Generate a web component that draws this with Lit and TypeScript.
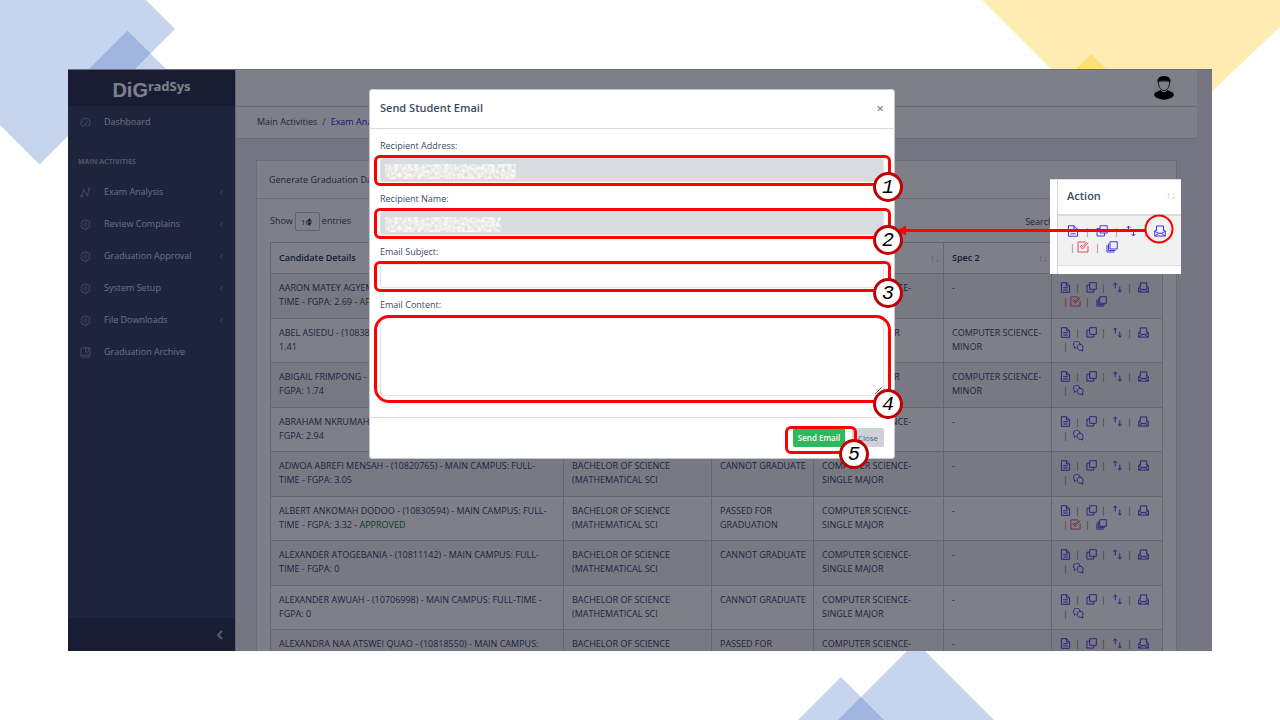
import { LitElement, html, svg, css, nothing } from "lit";
import { customElement, property } from "lit/decorators.js";

const icon = (body: unknown, cls = "icon") =>
  html`<svg class=${cls} viewBox="0 0 24 24" fill="none" stroke="currentColor" stroke-width="2" aria-hidden="true">${body}</svg>`;

const icons: Record<string, unknown> = {
  gauge: svg`<path d="M5 20a10 10 0 1 1 14 0h-4M5 20h4M12 15l5-6M12 6v1M5 13h1M7 8l1 1"/><circle cx="11.500" cy="16" r="1.500"/>`,
  graph: svg`<circle cx="3.500" cy="20" r="2"/><circle cx="8" cy="8" r="2"/><circle cx="16" cy="17" r="2"/><circle cx="20.500" cy="4" r="2"/><path d="M4.200 18l3-8M9.500 9.500l5 6M16.600 15l3.200-9"/>`,
  cog: svg`<path d="M9.500 1.500h5l1 3.500 3.500-.8 2.800 4.300L19.500 12l2.300 3.500L19 19.800l-3.500-.8-1 3.500h-5l-1-3.500-3.500.8-2.800-4.300L4.500 12 2.200 8.500 5 4.200l3.500.8z"/><circle cx="12" cy="12" r="3"/>`,
  book: svg`<path d="M22 18V2H5a3 3 0 0 0-3 3v14a3 3 0 0 0 3 3h17M22 18H5a3 3 0 0 0-3 2M12 2v9h6V2"/>`,
  doc: svg`<path d="M3 1.500h11l7 7v14H3zM14 1.500v7h7M7 12.500h10M7 17.500h10"/>`,
  copy: svg`<path d="M8 1.500h14.500V16H8zM8 7H2v15h15v-6"/>`,
  swap: svg`<path d="M7 14V2M3 6l4-4 4 4M17 10v12M13 18l4 4 4-4"/>`,
  mail: svg`<path d="M5 12V2h14v10M5 9l-3.500 3v10h21V12L19 9M1.500 12.500l7 4h7l7-4M1.500 22l7-5M22.500 22l-7-5"/>`,
  check: svg`<path d="M22 10v12H2V2h15M6 10l5 6L22.500 3.500M8.500 8l3 3.500L19 3"/>`,
  stack: svg`<path d="M8 1.500h14.500V16H8zM5 5v14h14M2 8v14h15"/>`,
  chat: svg`<path d="M15 7A7 7 0 1 0 3 12v4l3-2M9 13a6.500 6.500 0 1 1 12 4v5l-4-2A6.500 6.500 0 0 1 9 13z"/>`,
};

interface Student {
  details: string[];
  approved?: boolean;
  programme: string[];
  status: string[];
  major: string[];
  minor: string[];
}

const BSC = ["BACHELOR OF SCIENCE", "(MATHEMATICAL SCI"];
const SINGLE = ["COMPUTER SCIENCE-", "SINGLE MAJOR"];
const STATS = ["STATISTICS-MAJOR"];
const MINOR = ["COMPUTER SCIENCE-", "MINOR"];
const PASSED = ["PASSED FOR", "GRADUATION"];
const CANNOT = ["CANNOT GRADUATE"];
const NONE = ["-"];

const students: Student[] = [
  { details: ["AARON MATEY AGYEMAN - MAIN CAMPUS: FULL-", "TIME - FGPA: 2.69 - "], approved: true, programme: BSC, status: PASSED, major: SINGLE, minor: NONE },
  { details: ["ABEL ASIEDU - (10838) - MAIN CAMPUS: FULL-TIME - FGPA:", "1.41"], programme: BSC, status: CANNOT, major: STATS, minor: MINOR },
  { details: ["ABIGAIL FRIMPONG - MAIN CAMPUS: FULL-TIME -", "FGPA: 1.74"], programme: BSC, status: CANNOT, major: STATS, minor: MINOR },
  { details: ["ABRAHAM NKRUMAH - MAIN CAMPUS: FULL-TIME -", "FGPA: 2.94"], programme: BSC, status: CANNOT, major: SINGLE, minor: NONE },
  { details: ["ADWOA ABREFI MENSAH - (10820765) - MAIN CAMPUS: FULL-", "TIME - FGPA: 3.05"], programme: BSC, status: CANNOT, major: SINGLE, minor: NONE },
  { details: ["ALBERT ANKOMAH DODOO - (10830594) - MAIN CAMPUS: FULL-", "TIME - FGPA: 3.32 - "], approved: true, programme: BSC, status: PASSED, major: SINGLE, minor: NONE },
  { details: ["ALEXANDER ATOGEBANIA - (10811142) - MAIN CAMPUS: FULL-", "TIME - FGPA: 0"], programme: BSC, status: CANNOT, major: SINGLE, minor: NONE },
  { details: ["ALEXANDER AWUAH - (10706998) - MAIN CAMPUS: FULL-TIME -", "FGPA: 0"], programme: BSC, status: CANNOT, major: SINGLE, minor: NONE },
  { details: ["ALEXANDRA NAA ATSWEI QUAO - (10818550) - MAIN CAMPUS:", "FULL-TIME - FGPA: 0"], programme: BSC, status: PASSED, major: SINGLE, minor: NONE },
];

const lines = (parts: string[]) => parts.map((p, i) => (i ? html`<br />${p}` : p));

@customElement("row-actions")
class RowActions extends LitElement {
  @property({ type: Boolean }) approved = false;

  static styles = css`
    :host { display: block; margin-top: -1px; color: #4634e0; }
    .line { display: flex; align-items: center; height: var(--action-line, 14px); }
    .second { padding-left: 3px; }
    .link { display: flex; color: inherit; }
    .danger { color: #e04a62; }
    .talk { padding-left: 3px; }
    .icon { width: var(--action-icon, 11px); height: var(--action-icon, 11px); }
    .bar { width: 3px; margin: 0 var(--bar-after, 8px) 0 var(--bar-before, 4px); color: #8a7468; font-size: 9px; line-height: 1; text-align: center; }
    .lead { margin: 0 4px 0 0; }
  `;

  render() {
    const bar = html`<span class="bar">|</span>`;
    const link = (name: string, label: string, cls = "") =>
      html`<a class="link ${cls}" href="#" aria-label=${label}>${icon(icons[name])}</a>`;
    return html`
      <div class="line">
        ${link("doc", "Report")}${bar}${link("copy", "Copy")}${bar}${link("swap", "Change")}${bar}${link("mail", "Send email")}
      </div>
      <div class="line second">
        <span class="bar lead">|</span>
        ${this.approved
          ? html`${link("check", "Approve", "danger")}<span class="bar">|</span>${link("stack", "Archive")}`
          : link("chat", "Comments", "talk")}
      </div>
    `;
  }
}

@customElement("app-root")
export class AppRoot extends LitElement {
  static styles = css`
    :host { display: block; font-family: "Open Sans", "Noto Sans", sans-serif; color: #3c4b64; }
    * { box-sizing: border-box; }
    .slide { position: relative; height: 100vh; padding: 69px 68px; background: #fff; overflow: hidden; }
    .shape { position: absolute; width: 300px; height: 170px; }
    .top-left { left: 0; top: 0; }
    .top-right { right: 0; top: 0; }
    .bottom { left: 796px; bottom: 0; width: 200px; height: 80px; }

    .screen { position: relative; height: 100%; }
    .window { display: flex; height: 100%; overflow: hidden; background: #ebedef; font-size: 9px; line-height: 14px; }

    .sidebar { display: flex; flex-direction: column; flex: none; width: 167px; background: #3e4865; color: #dcdee3; font-size: 9px; }
    .brand { display: flex; justify-content: center; height: 37px; padding-top: 9px; background: #303a50; color: #fff; }
    .brand-main { font: bold 20px/24px "Liberation Sans", sans-serif; }
    .brand-sup { font: bold 13px/17px "Noto Sans", sans-serif; }
    .nav { flex: 1; display: flex; flex-direction: column; }
    .nav-link { display: flex; align-items: center; height: 32px; padding: 0 11px 0 12px; color: inherit; text-decoration: none; }
    .nav-link .icon { width: 11px; height: 11px; margin-right: 13px; color: #9298a8; }
    .nav-link .chevron { width: 5px; height: 5px; margin-left: auto; color: #9298a8; }
    .nav-title { height: 38px; padding: 17px 10px 0; font-size: 7px; font-weight: 700; color: #a3a8b6; }
    .minimizer { display: flex; align-items: center; justify-content: flex-end; height: 33px; padding: 0 10px; border: 0; background: #303a50; color: #b8bcc8; }
    .minimizer .chevron { width: 10px; height: 10px; }

    .main { flex: 1; min-width: 0; border-left: 1px solid #c4c9d0; }
    .topbar { display: flex; justify-content: flex-end; align-items: center; height: 38px; margin-right: 15px; padding-right: 21px; background: #fff; border-bottom: 1px solid #d0d4da; }
    .avatar { width: 24px; height: 26px; }
    .crumbs { display: flex; align-items: center; gap: 5px; height: 32px; margin-right: 15px; padding-left: 21px; padding-bottom: 2px; background: #fff; border-bottom: 1px solid #d0d4da; }
    .crumb-link { color: #321fdb; text-decoration: none; }
    .card { margin: 21px 35px 0 20px; background: #fff; border: 1px solid #d8dbe0; }
    .card-head { display: flex; align-items: center; height: 38px; padding: 0 12px; border-bottom: 1px solid #d8dbe0; }
    .card-body { padding: 13px 13px 0; }
    .tools { display: flex; justify-content: space-between; height: 30px; }
    .length { display: flex; gap: 2px; height: 20px; line-height: 18px; }
    .select { width: 25px; height: 19px; padding: 0 5px; appearance: none; border: 1px solid #c4c9d0; border-radius: 2px; background: transparent; font: 8px "Open Sans", sans-serif; color: inherit; }
    .picker { position: relative; height: 19px; }
    .picker-arrows { position: absolute; right: 8px; top: 6px; width: 5px; height: 8px; pointer-events: none; }
    .search { display: flex; gap: 5px; height: 20px; line-height: 20px; }
    .search-input { width: 102px; height: 20px; border: 1px solid #d8dbe0; border-radius: 2px; }

    .grid { width: 100%; border-collapse: collapse; table-layout: fixed; border: 1px solid #c8ccd2; }
    .grid th, .grid td { padding: 0 8px; border: 1px solid #c8ccd2; text-align: left; white-space: nowrap; overflow: hidden; }
    .grid th { height: 31px; color: #2c3a52; font-weight: 600; }
    .grid td { height: 45px; padding-top: 7px; vertical-align: top; }
    .grid tbody tr:nth-child(even) td { height: 44px; }
    .grid tbody tr:nth-child(odd) { background: #f2f2f2; }
    .c-programme { width: 148px; }
    .c-status { width: 102px; }
    .c-major { width: 130px; }
    .c-minor { width: 108px; }
    .c-action { width: 111px; }
    .head-cell { display: flex; justify-content: space-between; align-items: center; }
    .sort { margin-right: -5px; color: #a9adb6; font: 10px "Liberation Sans", sans-serif; }
    .ok { color: #147a1c; }

    .backdrop { position: absolute; inset: 0; display: flex; justify-content: center; align-items: flex-start; padding: 19px 16px 0 0; background: rgba(0, 0, 21, 0.5); border-top: 1px solid #6c6c78; }
    .modal { width: 526px; background: #fff; border: 1px solid #c6c6cc; border-radius: 3px; font-size: 9px; line-height: 16px; }
    .modal-head { display: flex; align-items: center; justify-content: space-between; height: 39px; padding: 0 10px 2px; border-bottom: 1px solid #d8dbe0; }
    .modal-title { margin: 0; font-size: 11px; font-weight: 600; }
    .x { padding: 0; border: 0; background: none; color: #7d8390; font: 600 13px "Open Sans", sans-serif; }
    .modal-body { display: flex; flex-direction: column; gap: 9px; padding: 9px 10px 21px; }
    .field { display: flex; flex-direction: column; gap: 4px; }
    .box { position: relative; display: flex; }
    .input { flex: 1; height: 24px; padding: 0 8px; border: 1px solid #e1e3e7; border-radius: 3px; background: #fff; }
    .input:read-only { background: #d8dbe0; }
    .area { height: 79px; resize: vertical; }
    .mosaic { position: absolute; left: 5px; top: 6px; height: 15px; }
    .address { width: 131px; }
    .name { width: 116px; }
    .ring { position: absolute; inset: -3px -7px -4px -6px; border: 3px solid #f00; border-radius: 6px; pointer-events: none; }
    .ring-area { inset: -2px -7px -7px -6px; border-radius: 15px; }
    .badge { position: absolute; z-index: 1; right: -19px; bottom: -20px; display: flex; align-items: center; justify-content: center; width: 30px; height: 30px; border: 3px solid #c00000; border-radius: 50%; background: #fff; color: #000; font: italic 20px "Liberation Mono", monospace; }
    .badge-area { bottom: -23px; }
    .modal-foot { display: flex; justify-content: flex-end; gap: 7px; height: 41px; padding: 10px 10px 0; border-top: 1px solid #d8dbe0; }
    .btn { height: 19px; padding: 0; border: 0; border-radius: 2px; font: 8px "Open Sans", sans-serif; }
    .send { width: 52px; background: #2eb85c; color: #fff; font-weight: 600; }
    .close { width: 32px; background: #ced2d8; color: #4f5d73; }
    .submit { position: relative; height: 19px; }
    .ring-send { inset: -2px -12px -7px -8px; }
    .badge-send { right: -24px; bottom: -22px; }

    .inset { position: absolute; right: 31px; top: 110px; width: 131px; height: 95px; padding-left: 7px; background: #fff; border-top: 1px solid #d8dbe0; }
    .inset-table { height: 100%; border-left: 1px solid #d0d4d9; }
    .inset-head { display: flex; justify-content: space-between; align-items: center; height: 36px; padding: 0 5px 4px 9px; border-bottom: 2px solid #d8dbe0; font-size: 11px; font-weight: 600; }
    .inset-head .sort { margin: 0; color: #c4c9d0; }
    .inset-row { height: 50px; padding: 8px 0 0 9px; background: #f1f1f1; border-bottom: 1px solid #d8dbe0; --action-line: 16px; --action-icon: 12px; --bar-before: 6px; --bar-after: 8px; }
    .pointer { position: absolute; right: 38px; top: 144px; width: 278px; height: 32px; }
  `;

  private chevron() {
    return html`<svg class="chevron" viewBox="0 0 10 10" fill="none" stroke="currentColor" stroke-width="2" aria-hidden="true"><path d="M7 1L3 5l4 4" /></svg>`;
  }

  private navLink(name: string, label: string, nested = true) {
    return html`<a class="nav-link" href="#">${icon(icons[name])}${label}${nested ? this.chevron() : nothing}</a>`;
  }

  private shapes() {
    return html`
      <svg class="shape top-left" viewBox="0 0 300 170" fill="#4472c4" fill-opacity=".3" aria-hidden="true">
        <path d="M-96 29L39.500 -106.500 175 29 39.500 164.500z" />
        <path d="M127.500 30.500L177 80H78z" />
      </svg>
      <svg class="shape top-right" viewBox="0 0 300 170" fill="#ffc000" fill-opacity=".3" aria-hidden="true">
        <path d="M2 0H300V27L167 153 132 130z" />
        <path d="M111 54L137 80H85z" />
      </svg>
      <svg class="shape bottom" viewBox="0 0 200 80" fill="#4472c4" fill-opacity=".3" aria-hidden="true">
        <path d="M45 37L88 80H2z" />
        <path d="M120 2L198 80H42z" />
      </svg>
    `;
  }

  private sidebar() {
    return html`
      <aside class="sidebar">
        <div class="brand"><span class="brand-main">DiG</span><span class="brand-sup">radSys</span></div>
        <nav class="nav">
          ${this.navLink("gauge", "Dashboard", false)}
          <div class="nav-title">MAIN ACTIVITIES</div>
          ${this.navLink("graph", "Exam Analysis")} ${this.navLink("cog", "Review Complains")}
          ${this.navLink("cog", "Graduation Approval")} ${this.navLink("cog", "System Setup")}
          ${this.navLink("cog", "File Downloads")} ${this.navLink("book", "Graduation Archive", false)}
        </nav>
        <button class="minimizer" aria-label="Collapse sidebar">${this.chevron()}</button>
      </aside>
    `;
  }

  private heading(label: string, cls: string) {
    return html`<th class=${cls}><div class="head-cell">${label}<span class="sort">↑↓</span></div></th>`;
  }

  private main() {
    return html`
      <main class="main">
        <header class="topbar">
          <svg class="avatar" viewBox="0 0 24 26" aria-hidden="true">
            <circle cx="12" cy="13" r="11.500" fill="#f6f6f8" />
            <path d="M2 20.500c0-3.500 4-4 6.500-5.500 2 3 5 3 7 0 2.500 1.500 6.500 2 6.500 5.500-4 5.500-16 5.500-20 0z" fill="#000" />
            <path d="M6.500 6C6 11 8.500 15.500 12 15.500S18 11 17.500 6z" fill="#fff" stroke="#222" />
            <path d="M5.500 7.500C5 3 8 1 12 1s7 2 6.500 6.500L17.500 6c-3-.8-8-.8-11 0z" fill="#000" />
          </svg>
        </header>
        <nav class="crumbs"><span>Main Activities</span><span>/</span><a class="crumb-link" href="#">Exam Analysis</a></nav>
        <section class="card">
          <div class="card-head">Generate Graduation Data</div>
          <div class="card-body">
            <div class="tools">
              <div class="length">
                <label for="len">Show</label>
                <span class="picker">
                  <select id="len" class="select"><option>10</option></select>
                  <svg class="picker-arrows" viewBox="0 0 5 8" fill="#3c4b64" aria-hidden="true"><path d="M0 3.500L2.500 0 5 3.500zM0 4.500L2.500 8 5 4.500z" /></svg>
                </span>
                <span>entries</span>
              </div>
              <div class="search"><label for="q">Search:</label><input id="q" class="search-input" /></div>
            </div>
            <table class="grid">
              <thead>
                <tr>
                  <th>Candidate Details</th>
                  ${this.heading("Programme", "c-programme")} ${this.heading("Status", "c-status")}
                  ${this.heading("Spec 1", "c-major")} ${this.heading("Spec 2", "c-minor")} ${this.heading("Action", "c-action")}
                </tr>
              </thead>
              <tbody>
                ${students.map(
                  (s) => html`<tr>
                    <td>${lines(s.details)}${s.approved ? html`<span class="ok">APPROVED</span>` : nothing}</td>
                    <td>${lines(s.programme)}</td>
                    <td>${lines(s.status)}</td>
                    <td>${lines(s.major)}</td>
                    <td>${lines(s.minor)}</td>
                    <td><row-actions ?approved=${!!s.approved}></row-actions></td>
                  </tr>`
                )}
              </tbody>
            </table>
          </div>
        </section>
      </main>
    `;
  }

  private mosaic(cls: string) {
    return html`<svg class="mosaic ${cls}" aria-hidden="true">
      <filter id="grain" x="0" y="0" width="100%" height="100%">
        <feTurbulence type="fractalNoise" baseFrequency=".3" numOctaves="2" seed="4" />
        <feColorMatrix values=".45 0 0 0 .62  .45 0 0 0 .62  .45 0 0 0 .61  0 0 0 0 1" />
      </filter>
      <rect width="100%" height="100%" filter="url(#grain)" />
    </svg>`;
  }

  private modal() {
    return html`
      <div class="backdrop">
        <div class="modal" role="dialog" aria-labelledby="title">
          <div class="modal-head">
            <h2 id="title" class="modal-title">Send Student Email</h2>
            <button class="x" aria-label="Dismiss">×</button>
          </div>
          <div class="modal-body">
            <div class="field">
              <label for="address">Recipient Address:</label>
              <div class="box">
                <input id="address" class="input" readonly />${this.mosaic("address")}
                <span class="ring"></span><span class="badge">1</span>
              </div>
            </div>
            <div class="field">
              <label for="name">Recipient Name:</label>
              <div class="box">
                <input id="name" class="input" readonly />${this.mosaic("name")}
                <span class="ring"></span><span class="badge">2</span>
              </div>
            </div>
            <div class="field">
              <label for="subject">Email Subject:</label>
              <div class="box">
                <input id="subject" class="input" /><span class="ring"></span><span class="badge">3</span>
              </div>
            </div>
            <div class="field">
              <label for="content">Email Content:</label>
              <div class="box">
                <textarea id="content" class="input area"></textarea>
                <span class="ring ring-area"></span><span class="badge badge-area">4</span>
              </div>
            </div>
          </div>
          <div class="modal-foot">
            <div class="submit">
              <button class="btn send">Send Email</button>
              <span class="ring ring-send"></span><span class="badge badge-send">5</span>
            </div>
            <button class="btn close">Close</button>
          </div>
        </div>
      </div>
    `;
  }

  render() {
    return html`
      <div class="slide">
        ${this.shapes()}
        <div class="screen">
          <div class="window">${this.sidebar()}${this.main()}</div>
          ${this.modal()}
          <div class="inset">
            <div class="inset-table">
              <div class="inset-head">Action<span class="sort">↑↓</span></div>
              <div class="inset-row"><row-actions approved></row-actions></div>
            </div>
          </div>
          <svg class="pointer" viewBox="0 0 278 32" fill="none" stroke="#f00" aria-hidden="true">
            <path d="M9 17.500H249" stroke-width="3" />
            <path d="M1 17.500L10 12.500V22.500z" fill="#f00" stroke="none" />
            <circle cx="263" cy="16" r="13.500" stroke-width="2" />
          </svg>
        </div>
      </div>
    `;
  }
}
